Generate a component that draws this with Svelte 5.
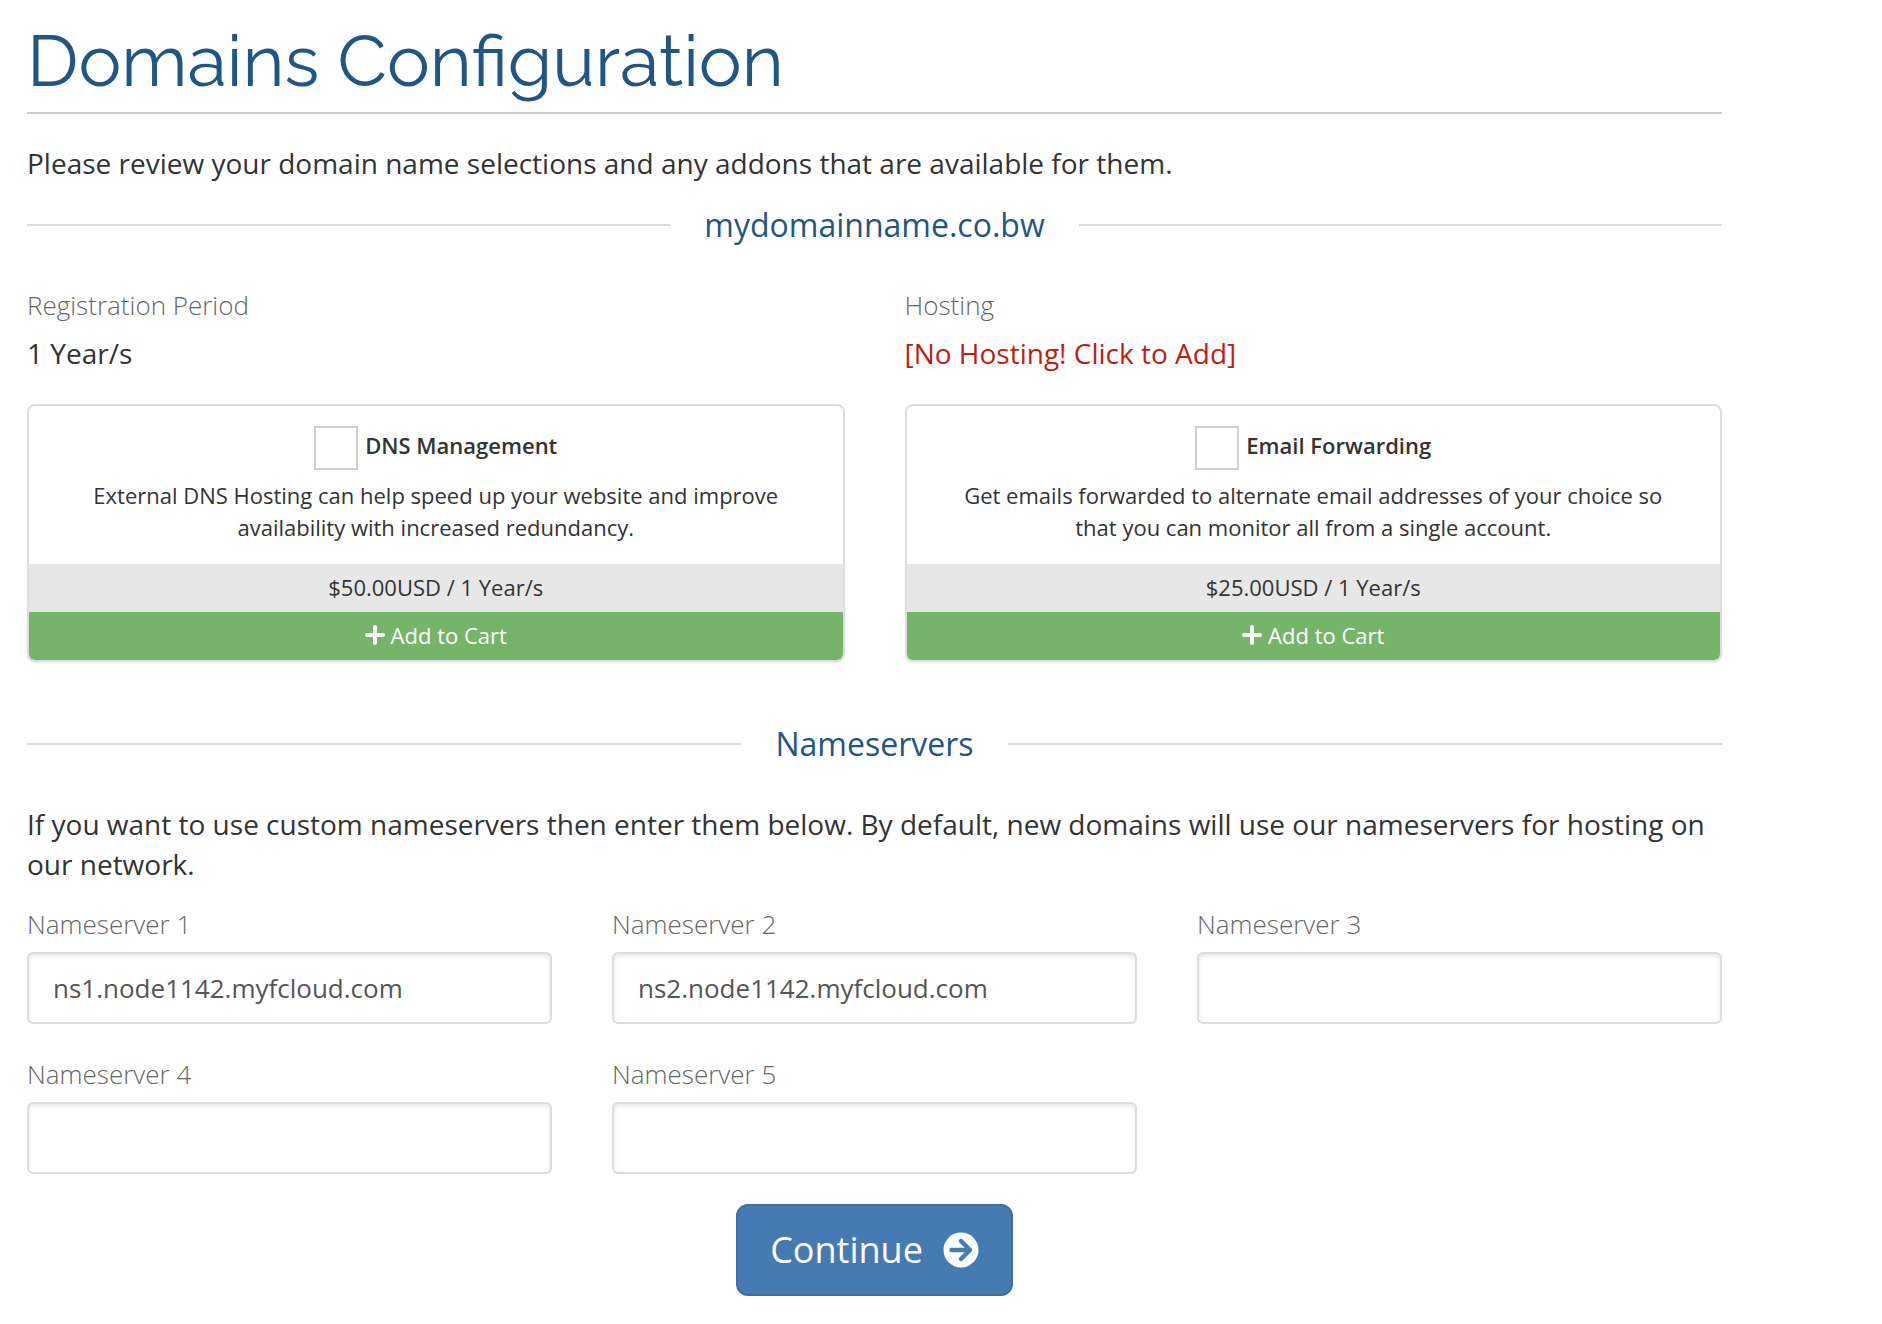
<!-- DomainsConfiguration -->
<script>
  let addons = $state([
    {
      id: 'dns-management',
      title: 'DNS Management',
      description:
        'External DNS Hosting can help speed up your website and improve availability with increased redundancy.',
      price: '$50.00USD / 1 Year/s',
      selected: false,
    },
    {
      id: 'email-forwarding',
      title: 'Email Forwarding',
      description:
        'Get emails forwarded to alternate email addresses of your choice so that you can monitor all from a single account.',
      price: '$25.00USD / 1 Year/s',
      selected: false,
    },
  ]);

  let nameservers = $state([
    'ns1.node1142.myfcloud.com',
    'ns2.node1142.myfcloud.com',
    '',
    '',
    '',
  ]);
</script>

<main class="page">
  <h1>Domains Configuration</h1>
  <p>Please review your domain name selections and any addons that are available for them.</p>

  <h2 class="sub-heading">mydomainname.co.bw</h2>

  <div class="row halves">
    <div>
      <div class="label">Registration Period</div>
      <div>1 Year/s</div>
    </div>
    <div>
      <div class="label">Hosting</div>
      <a class="no-hosting" href="#hosting">[No Hosting! Click to Add]</a>
    </div>
  </div>

  <div class="row halves addons">
    {#each addons as addon (addon.id)}
      <div class="panel">
        <div class="panel-body">
          <label class="panel-title" for={addon.id}>
            <input type="checkbox" id={addon.id} bind:checked={addon.selected} />
            <span>{addon.title}</span>
          </label>
          <div>{addon.description}</div>
        </div>
        <div class="panel-price">{addon.price}</div>
        <button
          class="panel-add"
          type="button"
          onclick={() => (addon.selected = !addon.selected)}
        >
          <svg class="plus" viewBox="0 0 20 20" aria-hidden="true">
            <path d="M10 2v16M2 10h16" />
          </svg>
          Add to Cart
        </button>
      </div>
    {/each}
  </div>

  <h2 class="sub-heading">Nameservers</h2>
  <p>
    If you want to use custom nameservers then enter them below. By default, new domains will use
    our nameservers for hosting on our network.
  </p>

  <form onsubmit={(e) => e.preventDefault()}>
    <div class="row thirds">
      {#each nameservers as _, i}
        <div>
          <label class="label" for="ns{i + 1}">Nameserver {i + 1}</label>
          <input class="form-control" type="text" id="ns{i + 1}" bind:value={nameservers[i]} />
        </div>
      {/each}
    </div>

    <div class="actions">
      <button class="btn-continue" type="submit">
        Continue
        <svg class="arrow" viewBox="0 0 36 36" aria-hidden="true">
          <circle cx="18" cy="18" r="17.5" />
          <path class="shaft" d="M8.500 18H25" />
          <path class="head" d="M18 9l9 9-9 9" />
        </svg>
      </button>
    </div>
  </form>
</main>

<style>
  :global(body) {
    margin: 0;
    background: #fff;
  }
  .page {
    padding: 20px 160px 28px 27px;
    color: #333;
    font-family: "Open Sans", sans-serif;
    font-size: 28px;
    line-height: 40px;
  }
  h1 {
    margin: 0 0 29px;
    padding-bottom: 10px;
    border-bottom: 2px solid #ccc;
    color: #1f5685;
    font-family: Raleway, Lato, sans-serif;
    font-size: 72px;
    font-weight: 400;
    line-height: 82px;
  }
  p {
    margin: 0 0 20px;
  }
  .sub-heading {
    display: flex;
    align-items: center;
    gap: 34px;
    margin: 0 0 38px;
    color: #1f5685;
    font-size: 32px;
    font-weight: 400;
    line-height: 44px;
  }
  .sub-heading::before,
  .sub-heading::after {
    content: "";
    flex: 1;
    height: 2px;
    background: #ddd;
  }
  .row {
    display: grid;
    gap: 30px 60px;
  }
  .halves {
    grid-template-columns: repeat(2, 1fr);
  }
  .thirds {
    grid-template-columns: repeat(3, 1fr);
  }
  .label {
    display: block;
    margin-bottom: 8px;
    color: #666;
    font-size: 26px;
    font-weight: 300;
    line-height: 40px;
  }
  .no-hosting {
    color: #bd1e14;
    text-decoration: none;
  }

  /* addon panels */
  .addons {
    margin: 31px 0 60px;
    font-size: 22px;
    line-height: 32px;
    text-align: center;
  }
  .panel {
    overflow: hidden;
    border: 2px solid #ddd;
    border-radius: 8px;
    box-shadow: 0 2px 2px rgba(0, 0, 0, 0.05);
  }
  .panel-body {
    padding: 20px 50px 21px;
  }
  .panel-title {
    display: flex;
    justify-content: center;
    gap: 7px;
    margin-bottom: 9px;
    font-weight: 600;
    line-height: 38px;
  }
  .panel-title input {
    appearance: none;
    box-sizing: border-box;
    width: 44px;
    height: 44px;
    margin: 0;
    border: 2px solid #d2cec8;
    background: #fff;
  }
  .panel-title input:checked {
    box-shadow: inset 0 0 0 8px #fff;
    background: #76b569;
  }
  .panel-price {
    padding: 7px 8px 9px;
    background: #e7e7e7;
  }
  .panel-add {
    display: flex;
    align-items: center;
    justify-content: center;
    gap: 6px;
    width: 100%;
    padding: 7px 8px 9px;
    border: 0;
    background: #76b569;
    color: #fff;
    font: inherit;
    cursor: pointer;
  }
  .plus {
    width: 20px;
    height: 20px;
    fill: none;
    stroke: #fff;
    stroke-width: 4;
    stroke-linecap: round;
  }

  /* nameserver form */
  .form-control {
    box-sizing: border-box;
    display: block;
    width: 100%;
    height: 72px;
    padding: 12px 24px;
    border: 2px solid #ddd;
    border-radius: 6px;
    box-shadow: inset 0 2px 4px rgba(0, 0, 0, 0.1);
    background: #fff;
    color: #555;
    font: inherit;
    font-size: 26px;
  }
  .actions {
    display: flex;
    justify-content: center;
    margin-top: 30px;
  }
  .btn-continue {
    display: flex;
    align-items: center;
    gap: 20px;
    padding: 20px 32px;
    border: 2px solid #3d6f9f;
    border-radius: 12px;
    background: #467ab2;
    color: #fff;
    font: inherit;
    font-size: 36px;
    line-height: 48px;
    cursor: pointer;
  }
  .arrow {
    width: 36px;
    height: 36px;
  }
  .arrow circle {
    fill: #fff;
  }
  .arrow path {
    fill: none;
    stroke: #467ab2;
    stroke-width: 4.5;
    stroke-linecap: round;
    stroke-linejoin: round;
  }
</style>
